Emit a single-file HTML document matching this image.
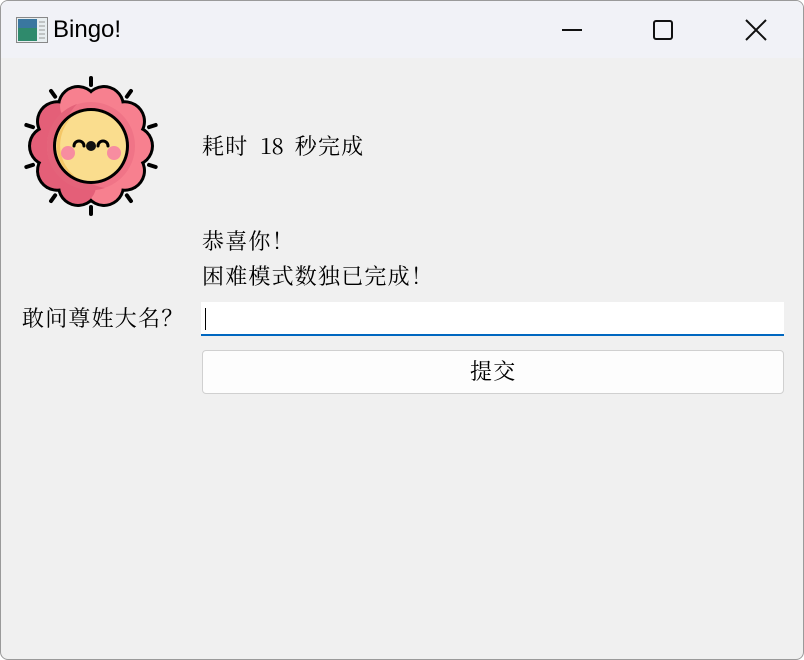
<!DOCTYPE html>
<html><head><meta charset="utf-8"><style>
body{margin:0;width:804px;height:660px;overflow:hidden;background:#fff;font-family:"Noto Serif CJK SC","Liberation Serif",serif;}
.win{position:absolute;left:0;top:0;width:802px;height:658px;border:1px solid #9a9a9a;border-radius:8px;background:#f0f0f0;overflow:hidden}
.tb{position:absolute;left:0;top:0;width:100%;height:57px;background:#f1f2f7}
.t{position:absolute;font-size:22px;letter-spacing:1.2px;color:#000;white-space:nowrap;line-height:1}
.h{display:inline-block;width:11.6px;text-align:center;letter-spacing:0}
</style></head><body>
<div class="win">
<div class="tb">
 <svg style="position:absolute;left:15px;top:16px" width="32" height="26"><rect x="0.5" y="0.5" width="31" height="25" fill="#e8eef0" stroke="#888"/><rect x="2" y="2" width="19" height="22" fill="#2f8a6c"/><rect x="2" y="2" width="19" height="9" fill="#3a77a0"/><path d="M23 5h6M23 9h6M23 13h6M23 17h6M23 21h6" stroke="#999"/></svg>
 <div style="position:absolute;left:52px;top:15px;font-family:'Liberation Sans',sans-serif;font-size:24px">Bingo!</div>
 <div style="position:absolute;left:561px;top:28px;width:20px;height:2px;background:#111"></div>
 <div style="position:absolute;left:652px;top:19px;width:16px;height:16px;border:2px solid #111;border-radius:3px"></div>
 <svg style="position:absolute;left:744px;top:18px" width="22" height="22"><path d="M1 1L21 21M21 1L1 21" stroke="#111" stroke-width="2"/></svg>
</div>
<svg style="position:absolute;left:0;top:0" width="200" height="230">
<defs>
 <line id="r" x1="0" y1="-61" x2="0" y2="-68" stroke="#000" stroke-width="4" stroke-linecap="round"/>
 <circle id="k" cx="0" cy="-42" r="21" fill="#000"/>
 <circle id="p" cx="0" cy="-42" r="18" fill="#f7808f"/>
 <circle id="q" cx="0" cy="-42" r="18" fill="#e45f78"/>
</defs>
<g transform="translate(90,145)">
 <use href="#r"/><use href="#r" transform="rotate(36)"/><use href="#r" transform="rotate(72)"/><use href="#r" transform="rotate(108)"/><use href="#r" transform="rotate(144)"/><use href="#r" transform="rotate(180)"/><use href="#r" transform="rotate(216)"/><use href="#r" transform="rotate(252)"/><use href="#r" transform="rotate(288)"/><use href="#r" transform="rotate(324)"/>
 <use href="#k" transform="rotate(18)"/><use href="#k" transform="rotate(54)"/><use href="#k" transform="rotate(90)"/><use href="#k" transform="rotate(126)"/><use href="#k" transform="rotate(162)"/><use href="#k" transform="rotate(198)"/><use href="#k" transform="rotate(234)"/><use href="#k" transform="rotate(270)"/><use href="#k" transform="rotate(306)"/><use href="#k" transform="rotate(342)"/>
 <circle r="44" fill="#000"/>
 <use href="#p" transform="rotate(18)"/><use href="#p" transform="rotate(54)"/><use href="#p" transform="rotate(90)"/><use href="#p" transform="rotate(126)"/><use href="#p" transform="rotate(162)"/><use href="#q" transform="rotate(198)"/><use href="#q" transform="rotate(234)"/><use href="#q" transform="rotate(270)"/><use href="#q" transform="rotate(306)"/><use href="#p" transform="rotate(342)"/>
 <circle r="44" fill="#f07487"/>
 <path d="M-44 0A44 44 0 0 1 -14 -42 A50 50 0 0 0 14 42 A44 44 0 0 1 -44 0Z" fill="#e4637a"/>
 <circle r="38" fill="#000"/><circle r="35" fill="#fadd8e"/>
 <path d="M-20 -28A35 35 0 0 0 -14 32 A40 40 0 0 1 -20 -28Z" fill="#f5c766"/>
 <circle cx="-23" cy="7" r="7" fill="#f78da0"/><circle cx="23" cy="7" r="7" fill="#f78da0"/>
 <circle cx="0" cy="0" r="5" fill="#111"/>
 <path d="M-17 0a5 5 0 0 1 10 0M7 0a5 5 0 0 1 10 0" stroke="#000" stroke-width="3" fill="none" stroke-linecap="round"/>
</g>
</svg>
<div class="t" style="left:201px;top:134px">耗时<span class="h"> </span><span class="h">1</span><span class="h">8</span><span class="h"> </span>秒完成</div>
<div class="t" style="left:201px;top:229px">恭喜你！</div>
<div class="t" style="left:201px;top:264px">困难模式数独已完成！</div>
<div class="t" style="left:21px;top:306px">敢问尊姓大名？</div>
<div style="position:absolute;left:200px;top:301px;width:583px;height:32px;background:#fff;border-bottom:2px solid #0067c0"></div>
<div style="position:absolute;left:204px;top:307px;width:1px;height:22px;background:#000"></div>
<div style="position:absolute;left:201px;top:349px;width:580px;height:42px;background:#fdfdfd;border:1px solid #d0d0d0;border-radius:4px"></div>
<div class="t" style="left:469px;top:359px">提交</div>
</div>
</body></html>
